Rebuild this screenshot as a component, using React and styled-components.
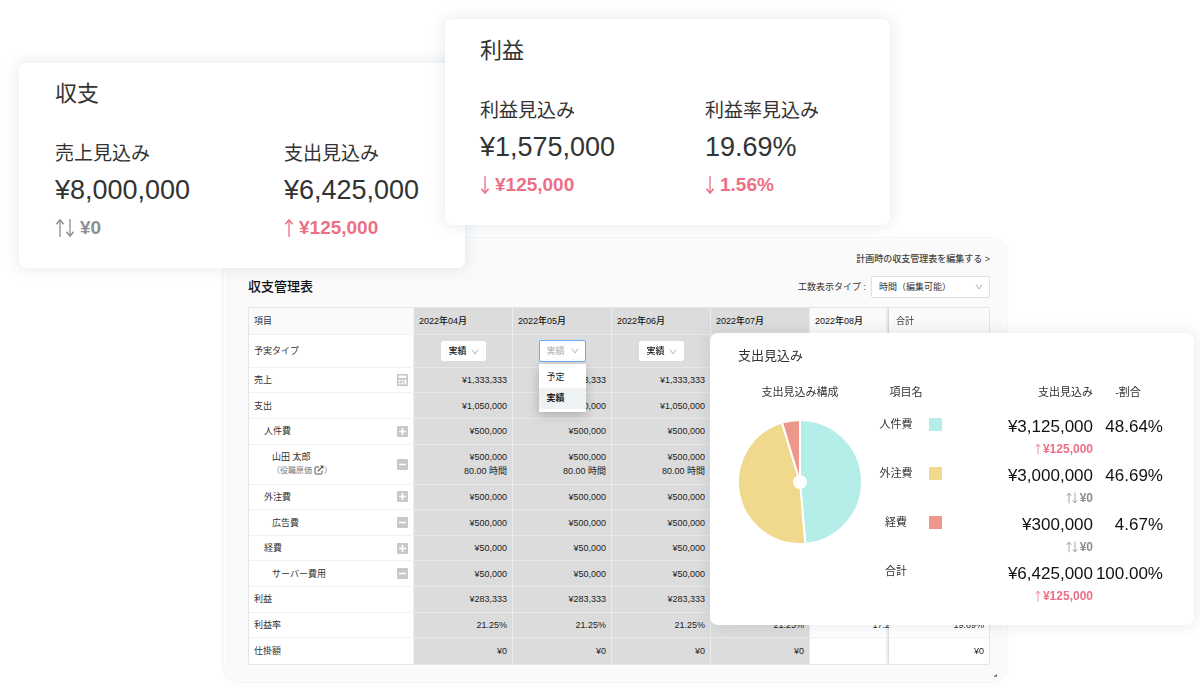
import React, { useState } from 'react';
import styled, { createGlobalStyle, css } from 'styled-components';

const months = ['2022年04月', '2022年05月', '2022年06月', '2022年07月', '2022年08月'];

// the first four months share one value, the fifth is still open
const same = (value) => [value, value, value, value];

const rows = [
  { name: '売上', icon: 'calc', values: [...same('¥1,333,333'), ''], total: '¥8,000,000' },
  { name: '支出', values: [...same('¥1,050,000'), ''], total: '¥6,425,000' },
  { name: '人件費', level: 1, icon: 'plus', values: [...same('¥500,000'), ''], total: '¥3,125,000' },
  {
    name: '山田 太郎',
    note: '役職原価',
    level: 2,
    icon: 'minus',
    values: [...same('¥500,000'), ''],
    hours: '80.00 時間',
    total: '¥3,125,000',
  },
  { name: '外注費', level: 1, icon: 'plus', values: [...same('¥500,000'), ''], total: '¥3,000,000' },
  { name: '広告費', level: 2, icon: 'minus', values: [...same('¥500,000'), ''], total: '¥3,000,000' },
  { name: '経費', level: 1, icon: 'plus', values: [...same('¥50,000'), ''], total: '¥300,000' },
  { name: 'サーバー費用', level: 2, icon: 'minus', values: [...same('¥50,000'), ''], total: '¥300,000' },
  { name: '利益', values: [...same('¥283,333'), ''], total: '¥1,575,000' },
  { name: '利益率', values: [...same('21.25%'), '17.28%'], total: '19.69%' },
  { name: '仕掛額', values: [...same('¥0'), ''], total: '¥0' },
];

const expenses = [
  { name: '人件費', color: '#b5ede9', amount: '¥3,125,000', ratio: '48.64%', share: 48.64, trend: 'up', diff: '¥125,000' },
  { name: '外注費', color: '#f0d88c', amount: '¥3,000,000', ratio: '46.69%', share: 46.69, trend: 'flat', diff: '¥0' },
  { name: '経費', color: '#ec978a', amount: '¥300,000', ratio: '4.67%', share: 4.67, trend: 'flat', diff: '¥0' },
  { name: '合計', amount: '¥6,425,000', ratio: '100.00%', trend: 'up', diff: '¥125,000' },
];

const UpArrow = () => (
  <svg viewBox="0 0 10 20" aria-hidden="true">
    <path d="M5 19V2" fill="none" stroke="currentColor" strokeWidth="1.3" />
    <path d="M1.4 6.2 L5 2 L8.6 6.2" fill="none" stroke="currentColor" strokeWidth="1.5" />
  </svg>
);

const DownArrow = () => (
  <svg viewBox="0 0 10 20" aria-hidden="true">
    <path d="M5 1V18" fill="none" stroke="currentColor" strokeWidth="1.3" />
    <path d="M1.4 13.8 L5 18 L8.6 13.8" fill="none" stroke="currentColor" strokeWidth="1.5" />
  </svg>
);

const Chevron = () => (
  <svg viewBox="0 0 8 8" aria-hidden="true">
    <path d="M1 1.5 L4 6 L7 1.5" fill="none" stroke="currentColor" strokeWidth="0.9" />
  </svg>
);

const CalcIcon = () => (
  <svg viewBox="0 0 11 12" width="11" height="12" aria-hidden="true">
    <rect width="11" height="12" rx="1" fill="#c2c5c5" />
    <path
      d="M1.5 1.5h8v2.4h-8zM1.5 5.5h2v2h-2zM4.5 5.5h2v2h-2zM1.5 8.5h2v2h-2zM4.5 8.5h2v2h-2zM7.5 5.5h2v5h-2z"
      fill="#fff"
    />
  </svg>
);

const LinkIcon = () => (
  <svg viewBox="0 0 10 10" width="10" height="10" aria-hidden="true">
    <path d="M5.2 2H1.6a.6.6 0 0 0-.6.6v5.8c0 .3.3.6.6.6h5.8c.3 0 .6-.3.6-.6V5.6" fill="none" stroke="#555" strokeWidth="1" />
    <path d="M3.8 6.4 L8.4 1.6" stroke="#555" strokeWidth="1.3" />
    <path d="M6 .6h3.4V4z" fill="#555" />
  </svg>
);

const ToggleIcon = ({ plus }) => (
  <svg viewBox="0 0 11 11" width="11" height="11" aria-hidden="true">
    <rect width="11" height="11" rx="1" fill="#c6c9c9" />
    <path d={plus ? 'M2 5.5h7M5.5 2v7' : 'M2 5.5h7'} stroke="#fff" strokeWidth="1.6" />
  </svg>
);

const Delta = ({ trend, small, children }) => (
  <DeltaLine $muted={trend === 'flat'} $small={small}>
    {trend !== 'down' && <UpArrow />}
    {trend !== 'up' && <DownArrow />}
    <span>{children}</span>
  </DeltaLine>
);

const SummaryCard = ({ as: Card, title, items }) => (
  <Card>
    <CardTitle>{title}</CardTitle>
    <Stats>
      {items.map((item) => (
        <Stat key={item.label}>
          <StatLabel>{item.label}</StatLabel>
          <StatValue>{item.value}</StatValue>
          <Delta trend={item.trend}>{item.diff}</Delta>
        </Stat>
      ))}
    </Stats>
  </Card>
);

const RADIUS = 62;

const point = (share, radius) => {
  const angle = (share / 100) * Math.PI * 2;
  return `${RADIUS + radius * Math.sin(angle)} ${RADIUS - radius * Math.cos(angle)}`;
};

const Pie = () => {
  let start = 0;
  const slices = expenses
    .filter((item) => item.share)
    .map((item) => {
      const end = start + item.share;
      const d = `M${RADIUS} ${RADIUS} L${point(start, 62)} A62 62 0 0 1 ${point(end, 62)} Z`;
      start = end;
      return <path key={item.name} d={d} fill={item.color} stroke="#fff" strokeWidth="2" />;
    });
  return (
    <svg viewBox="0 0 124 124" width="124" height="124" role="img" aria-label="支出見込み構成">
      {slices}
      <circle cx="62" cy="62" r="7" fill="#fff" />
    </svg>
  );
};

const TypeSelect = ({ month, open }) => {
  const [value, setValue] = useState('実績');
  return (
    <SelectBox $open={open}>
      <TypeField
        aria-label={`${month} 予実タイプ`}
        value={value}
        $open={open}
        onChange={(e) => setValue(e.target.value)}
      >
        <option>予定</option>
        <option>実績</option>
      </TypeField>
      <Chevron />
      {open && (
        <Menu>
          <MenuItem onClick={() => setValue('予定')}>予定</MenuItem>
          <MenuItem $active onClick={() => setValue('実績')}>
            実績
          </MenuItem>
        </Menu>
      )}
    </SelectBox>
  );
};

const BudgetTable = () => (
  <TableScroll>
    <Table>
      <colgroup>
        <NameCol />
        {months.map((month) => (
          <MonthCol key={month} />
        ))}
        <TotalCol />
      </colgroup>
      <thead>
        <tr>
          <HeadCell scope="col">項目</HeadCell>
          {months.map((month, i) => (
            <HeadCell key={month} scope="col" $closed={i < 4} $strong>
              {month}
            </HeadCell>
          ))}
          <TotalHead scope="col">合計</TotalHead>
        </tr>
      </thead>
      <tbody>
        <TypeRow>
          <NameCell scope="row">予実タイプ</NameCell>
          {months.map((month, i) => (
            <TypeCell key={month} $closed={i < 4}>
              <TypeSelect month={month} open={i === 1} />
            </TypeCell>
          ))}
          <TotalCell />
        </TypeRow>
        {rows.map((row) => (
          <Row key={row.name} $tall={row.hours}>
            <NameCell scope="row" $level={row.level}>
              <NameInner>
                <div>
                  {row.name}
                  {row.note && (
                    <Note>
                      （{row.note} <LinkIcon />）
                    </Note>
                  )}
                </div>
                {row.icon && (
                  <IconButton type="button" aria-label={row.name}>
                    {row.icon === 'calc' ? <CalcIcon /> : <ToggleIcon plus={row.icon === 'plus'} />}
                  </IconButton>
                )}
              </NameInner>
            </NameCell>
            {row.values.map((value, i) => (
              <Cell key={months[i]} $closed={i < 4}>
                {value}
                {value && row.hours && <div>{row.hours}</div>}
              </Cell>
            ))}
            <TotalCell>{row.total}</TotalCell>
          </Row>
        ))}
      </tbody>
    </Table>
  </TableScroll>
);

const App = () => {
  return (
    <>
      <GlobalStyle />
      <Stage>
        <Board>
          <EditLink href="#plan">計画時の収支管理表を編集する &gt;</EditLink>
          <BoardHead>
            <BoardTitle>収支管理表</BoardTitle>
            <Field>
              <label htmlFor="hours-type">工数表示タイプ :</label>
              <HoursBox>
                <HoursField id="hours-type" defaultValue="時間（編集可能）">
                  <option>時間（編集可能）</option>
                </HoursField>
                <Chevron />
              </HoursBox>
            </Field>
          </BoardHead>
          <BudgetTable />
          <Grip viewBox="0 0 5 5" aria-hidden="true">
            <path d="M0.5 4 L4 1 L4 3.4 Z" fill="#555" />
          </Grip>
        </Board>

        <SummaryCard
          as={BalanceCard}
          title="収支"
          items={[
            { label: '売上見込み', value: '¥8,000,000', trend: 'flat', diff: '¥0' },
            { label: '支出見込み', value: '¥6,425,000', trend: 'up', diff: '¥125,000' },
          ]}
        />
        <SummaryCard
          as={ProfitCard}
          title="利益"
          items={[
            { label: '利益見込み', value: '¥1,575,000', trend: 'down', diff: '¥125,000' },
            { label: '利益率見込み', value: '19.69%', trend: 'down', diff: '1.56%' },
          ]}
        />

        <ExpenseCard>
          <ExpenseTitle>支出見込み</ExpenseTitle>
          <ExpenseBody>
            <Figure>
              <figcaption>支出見込み構成</figcaption>
              <Pie />
            </Figure>
            <ExpenseTable>
              <colgroup>
                <LabelCol />
                <SwatchCol />
                <col />
                <RatioCol />
              </colgroup>
              <thead>
                <tr>
                  <th scope="col" colSpan={2}>
                    項目名
                  </th>
                  <AmountHead scope="col">支出見込み</AmountHead>
                  <th scope="col">-割合</th>
                </tr>
              </thead>
              <tbody>
                {expenses.map((item) => (
                  <tr key={item.name}>
                    <ExpenseName scope="row">{item.name}</ExpenseName>
                    <td>{item.color && <Swatch $color={item.color} />}</td>
                    <AmountCell>
                      {item.amount}
                      <Delta trend={item.trend} small>
                        {item.diff}
                      </Delta>
                    </AmountCell>
                    <AmountCell>{item.ratio}</AmountCell>
                  </tr>
                ))}
              </tbody>
            </ExpenseTable>
          </ExpenseBody>
        </ExpenseCard>
      </Stage>
    </>
  );
};

export default App;

const GlobalStyle = createGlobalStyle`
  * {
    box-sizing: border-box;
  }

  body {
    margin: 0;
    background: #fff;
    color: #333;
    font-family: 'Liberation Sans', 'Noto Sans CJK JP', sans-serif;
  }

  h1, h2, ul, figure {
    margin: 0;
    padding: 0;
    font-weight: 400;
  }

  select, button {
    font-family: inherit;
  }
`;

const Stage = styled.main`
  position: relative;
  max-width: 1200px;
  margin: 0 auto;
  padding: 239px 194px 6px 224px;
`;

const Board = styled.section`
  position: relative;
  display: flex;
  flex-direction: column;
  padding: 11px 15px 15px 23px;
  border: 1px solid #fff;
  border-radius: 14px;
  background: #fafafa;
  box-shadow: 0 0 3px 2px #f4f7f9;
  font-size: 9px;
  line-height: 14px;
`;

const EditLink = styled.a`
  align-self: flex-end;
  color: #444;
  font-weight: 500;
  line-height: 16px;
  text-decoration: none;
`;

const BoardHead = styled.div`
  display: flex;
  align-items: center;
  justify-content: space-between;
  margin: 9px 0;
`;

const BoardTitle = styled.h2`
  color: #111;
  font-size: 13px;
  font-weight: 500;
  line-height: 20px;
`;

const Field = styled.div`
  display: flex;
  align-items: center;
  gap: 5px;
`;

const selectReset = css`
  appearance: none;
  border: 0;
  outline: none;
  margin: 0;
  background: transparent;
  color: inherit;
  font-size: 9px;
  cursor: pointer;
`;

const HoursBox = styled.div`
  position: relative;
  width: 119px;
  border: 1px solid #dfe2e2;
  border-radius: 2px;
  background: #fff;

  svg {
    position: absolute;
    top: 6px;
    right: 6px;
    width: 8px;
    height: 8px;
    color: #aaa;
    pointer-events: none;
  }
`;

const HoursField = styled.select`
  ${selectReset}
  width: 100%;
  height: 20px;
  padding: 0 7px;
`;

const TableScroll = styled.div`
  overflow-x: auto;
  scrollbar-width: none;
  border: 1px solid #e4e6e6;
  border-radius: 2px;
`;

const Table = styled.table`
  width: 760px;
  height: 356px;
  table-layout: fixed;
  border-collapse: separate;
  border-spacing: 0;
`;

const NameCol = styled.col`
  width: 165px;
`;

const MonthCol = styled.col`
  width: 99px;
`;

const TotalCol = styled.col`
  width: 100px;
`;

const cellBase = css`
  padding: 0 5px;
  border-right: 1px solid ${(props) => (props.$closed ? '#ebebeb' : '#f2f2f2')};
  border-bottom: 1px solid ${(props) => (props.$closed ? '#e8e8e8' : '#f0f1f1')};
  background: ${(props) => (props.$closed ? '#dcdcdc' : '#fff')};
  font-weight: 400;

  tbody tr:last-child > & {
    border-bottom-color: ${(props) => (props.$closed ? '#dcdcdc' : '#fff')};
  }
`;

const HeadCell = styled.th`
  ${cellBase}
  height: 27px;
  background: ${(props) => (props.$closed ? '#dcdcdc' : '#fafafa')};
  color: ${(props) => (props.$strong ? '#111' : '#333')};
  font-weight: ${(props) => (props.$strong ? 500 : 400)};
  text-align: left;
`;

// the clip keeps the shadow on the left edge only
const stickyRight = css`
  position: sticky;
  right: 0;
  border-right: 0;
  box-shadow: -1px 0 3px rgba(0, 0, 0, 0.22);
  clip-path: inset(0 0 0 -6px);
`;

const TotalHead = styled(HeadCell)`
  ${stickyRight}
  padding-left: 7px;
`;

const Row = styled.tr`
  height: ${(props) => (props.$tall ? '39px' : '25px')};
`;

const TypeRow = styled.tr`
  height: 32px;
`;

const NameCell = styled.th`
  ${cellBase}
  padding-left: ${(props) => [5, 15, 23][props.$level || 0]}px;
  border-right-color: #eee;
  text-align: left;
`;

const NameInner = styled.div`
  display: flex;
  align-items: center;
  justify-content: space-between;
`;

const Note = styled.div`
  color: #777;
  font-size: 8px;

  svg {
    vertical-align: -2px;
  }
`;

const IconButton = styled.button`
  display: flex;
  padding: 0;
  border: 0;
  background: none;
  cursor: pointer;
`;

const Cell = styled.td`
  ${cellBase}
  color: #222;
  text-align: right;
`;

const TotalCell = styled(Cell)`
  ${stickyRight}
`;

const TypeCell = styled.td`
  ${cellBase}
  text-align: center;
`;

const SelectBox = styled.div`
  position: relative;
  display: inline-block;
  vertical-align: middle;
  border: 1px solid ${(props) => (props.$open ? '#6aaef2' : '#fff')};
  border-radius: 2px;
  background: #fff;
  color: ${(props) => (props.$open ? '#bbb' : '#222')};

  > svg {
    position: absolute;
    top: 6px;
    right: 6px;
    width: 8px;
    height: 8px;
    color: #aaa;
    pointer-events: none;
  }
`;

const TypeField = styled.select`
  ${selectReset}
  display: block;
  width: ${(props) => (props.$open ? '45px' : '43px')};
  height: ${(props) => (props.$open ? '20px' : '18px')};
  padding: 0 7px;
  font-weight: 500;
`;

const Menu = styled.ul`
  position: absolute;
  z-index: 2;
  top: 23px;
  left: -1px;
  right: -1px;
  padding: 3px 0;
  background: #fff;
  box-shadow: 0 3px 10px rgba(0, 0, 0, 0.22);
  color: #222;
  list-style: none;
  text-align: left;
`;

const MenuItem = styled.li`
  padding: 0 8px;
  background: ${(props) => (props.$active ? '#eff2f2' : '#fff')};
  font-weight: ${(props) => (props.$active ? 700 : 400)};
  line-height: 21px;
  cursor: pointer;
`;

const Grip = styled.svg`
  position: absolute;
  right: 7px;
  bottom: 2px;
  width: 5px;
  height: 5px;
`;

const FloatingCard = styled.section`
  position: absolute;
  border-radius: 8px;
  background: #fff;
  box-shadow: 0 0 14px 2px rgba(70, 100, 130, 0.12);
`;

const BalanceCard = styled(FloatingCard)`
  top: 63px;
  left: 19px;
  width: 446px;
  padding: 15px 0 26px 36px;
`;

const ProfitCard = styled(FloatingCard)`
  top: 19px;
  left: 445px;
  width: 445px;
  padding: 16px 8px 26px 35px;
`;

const CardTitle = styled.h2`
  font-size: 22px;
  line-height: 32px;
`;

const Stats = styled.div`
  display: grid;
  grid-template-columns: 1fr 1fr;
  column-gap: 48px;
  margin-top: 30px;
`;

const Stat = styled.div`
  white-space: nowrap;
`;

const StatLabel = styled.div`
  font-size: 19px;
  line-height: 28px;
`;

const StatValue = styled.div`
  margin: 2px 0 4px;
  font-size: 27px;
  line-height: 40px;
`;

const DeltaLine = styled.div`
  display: flex;
  align-items: center;
  justify-content: ${(props) => (props.$small ? 'flex-end' : 'flex-start')};
  color: ${(props) => (props.$muted ? '#8f8f8f' : '#ed6f86')};
  font-size: ${(props) => (props.$small ? '12px' : '19px')};
  font-weight: 700;
  line-height: ${(props) => (props.$small ? '20px' : '28px')};

  svg {
    width: ${(props) => (props.$small ? '6px' : '10px')};
    height: ${(props) => (props.$small ? '12px' : '20px')};
  }

  span {
    margin-left: ${(props) => (props.$small ? '2px' : '5px')};
  }
`;

const ExpenseCard = styled(FloatingCard)`
  top: 333px;
  right: 6px;
  width: 484px;
  padding: 13px 31px 14px 28px;
  font-size: 11px;
`;

const ExpenseTitle = styled.h2`
  font-size: 13px;
  line-height: 20px;
`;

const ExpenseBody = styled.div`
  display: flex;
  justify-content: space-between;
  margin-top: 17px;
`;

const Figure = styled.figure`
  display: flex;
  flex-direction: column;
  align-items: center;
  gap: 19px;
  line-height: 18px;
`;

const ExpenseTable = styled.table`
  width: 293px;
  border-collapse: collapse;
  table-layout: fixed;

  th,
  td {
    padding: 0;
    vertical-align: top;
    font-weight: 400;
  }

  thead th {
    height: 32px;
    line-height: 18px;
  }

  tbody tr {
    height: 49px;
  }
`;

const LabelCol = styled.col`
  width: 52px;
`;

const SwatchCol = styled.col`
  width: 20px;
`;

const RatioCol = styled.col`
  width: 70px;
`;

const AmountHead = styled.th`
  && {
    text-align: right;
  }
`;

const ExpenseName = styled.th`
  line-height: 18px;
`;

const Swatch = styled.div`
  width: 13px;
  height: 13px;
  margin: 3px 0 0 auto;
  background: ${(props) => props.$color};
`;

const AmountCell = styled.td`
  color: #111;
  font-size: 17px;
  line-height: 24px;
  text-align: right;
`;
